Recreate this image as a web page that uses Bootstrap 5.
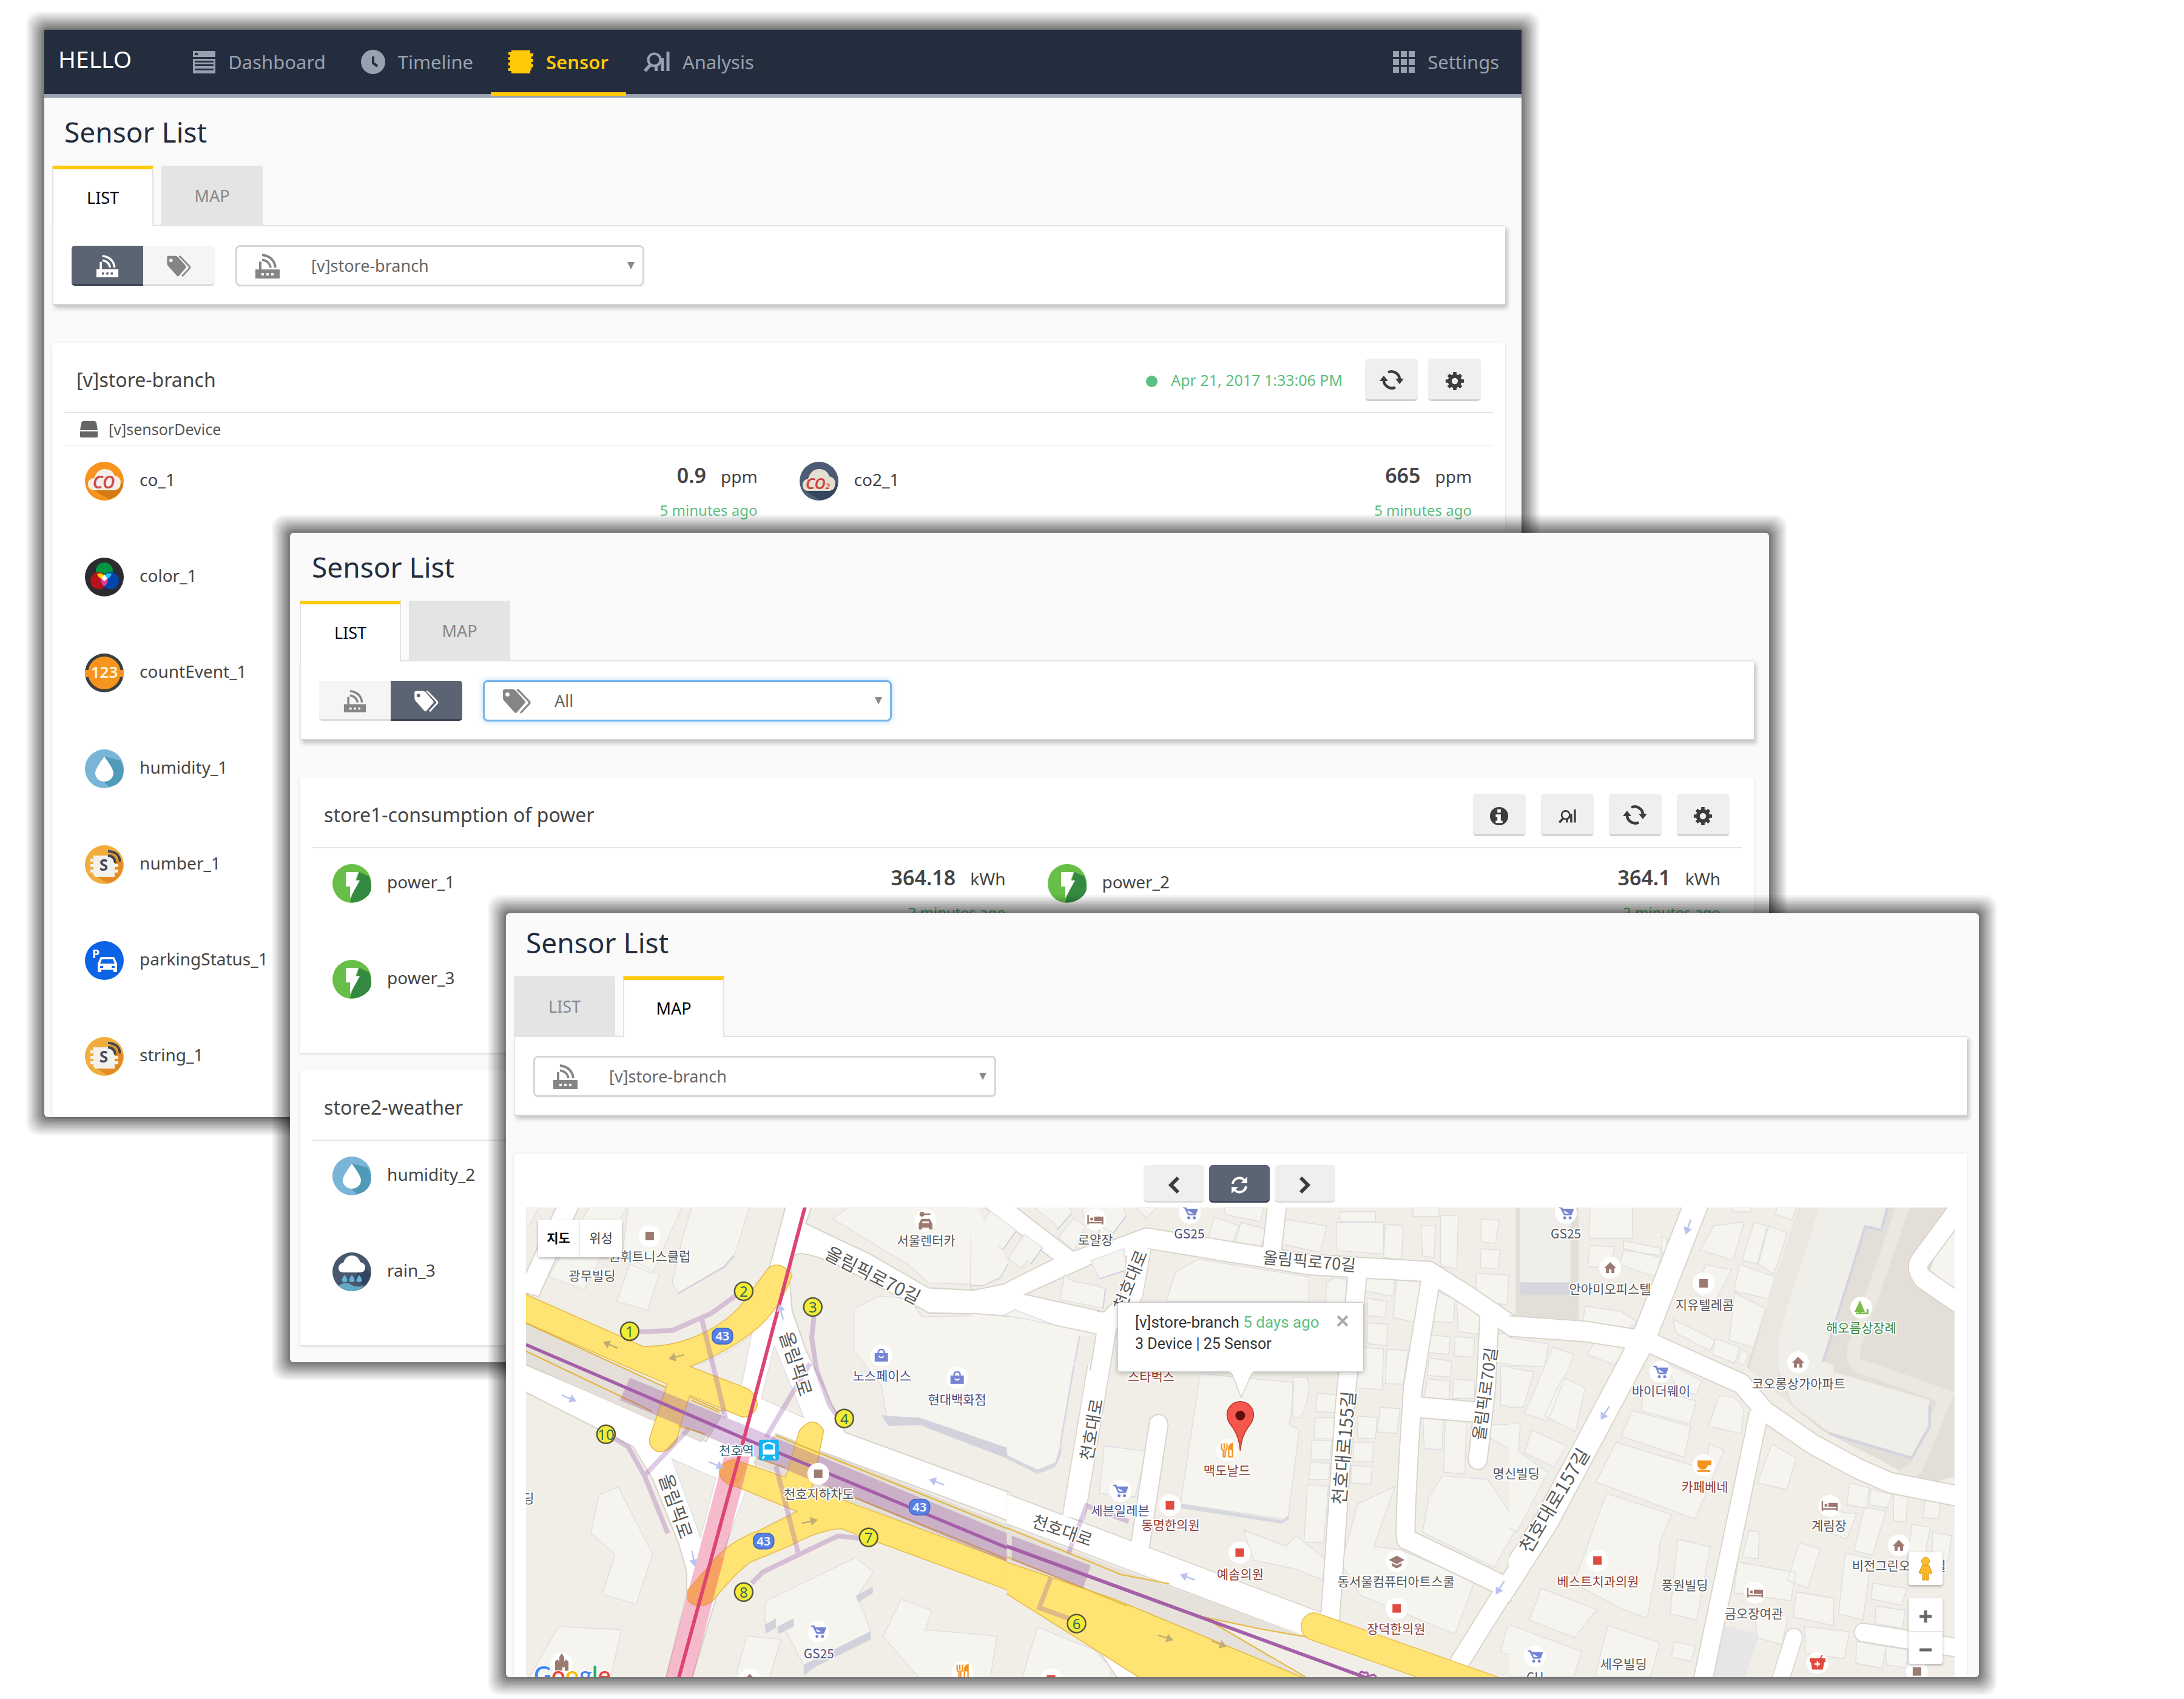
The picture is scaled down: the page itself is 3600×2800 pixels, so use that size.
<!DOCTYPE html>
<html lang="en">
<head>
<meta charset="utf-8">
<meta name="viewport" content="width=device-width, initial-scale=1">
<title>Sensor List</title>
<link rel="stylesheet" href="https://cdn.jsdelivr.net/npm/bootstrap@5.3.0/dist/css/bootstrap.min.css">
<style>
body{background:#fff;font-family:"Noto Sans","Noto Sans CJK KR",sans-serif;color:#444;font-size:28px;line-height:40px}
.desk{min-height:2800px;overflow:hidden}
.win{position:absolute;background:#fafafa;border-radius:6px;
 box-shadow:0 0 0 3px rgba(0,0,0,.1),0 0 0 6px rgba(0,0,0,.09),0 0 0 9px rgba(0,0,0,.08),0 0 0 12px rgba(0,0,0,.08),0 0 0 15px rgba(0,0,0,.07),0 0 0 18px rgba(0,0,0,.07),0 0 0 21px rgba(0,0,0,.06),0 0 0 24px rgba(0,0,0,.05),0 0 0 27px rgba(0,0,0,.05),0 0 0 30px rgba(0,0,0,.04)}
.win-a{left:2.03%;top:49px;width:67.64%}
.win-b{left:13.28%;top:878px;width:67.72%;padding-bottom:28px}
.win-c{left:23.17%;top:1505px;width:67.44%}
.win-a .inner{padding:0 27px 0 13px}
.win-b .inner{padding:0 25px 0 16px}
.win-c .inner{padding:0 20px 0 13px}
.topnav{background:#242d3e;height:112px;border-bottom:6px solid #9aa2b1;padding:0 8px 0 23px}
.brand{color:#fff;font-size:39px;line-height:50px;text-decoration:none;margin-right:72px;padding-bottom:10px}
.topnav .nav-link{color:#98a1b0;font-size:31px;height:112px;padding:6px 29px 0;border-bottom:6px solid transparent;gap:21px;display:flex;align-items:center}
.topnav .nav-link.active{color:#ffc907;font-weight:600;border-color:#ffc907}
.ttl{font-size:46px;line-height:60px;font-weight:400;color:#242d3e;margin:0;padding:26px 0 26px 20px}
.win-c .ttl{padding-top:18px}
.tabs{gap:13px;margin-bottom:-2px;position:relative}
.tabs button{border:0;width:167px;height:100px;background:#e4e4e4;color:#888;font-size:27px;padding:0}
.tabs button.on{background:#fff;color:#000;border:2px solid #e3e3e3;border-top:6px solid #ffc907;border-bottom:0}
.panel{background:#fff;border-top:2px solid #e3e3e3;border-left:2px solid #e6e6e6;border-bottom:2px solid #d4d4d4;box-shadow:4px 5px 7px rgba(0,0,0,.22);height:132px;padding:2px 30px 0;margin-bottom:62px;display:flex;align-items:center;gap:34px}
.seg button{width:118px;height:66px;border:0;border-bottom:3px solid #ddd;background:#f5f5f5;color:#858585;padding:0}
.seg button.on{background:#5b6473;color:#fff;border-color:#3c4453}
.seg button:first-child{border-radius:5px 0 0 5px}.seg button:last-child{border-radius:0 5px 5px 0}
.pick{position:relative;width:674px}
.pick.wide{width:763px}
.pick select{width:100%;height:68px;border:3px solid #d6d6d6;border-radius:8px;background:#fff;color:#666;font-size:27px;padding:0 40px 0 122px;appearance:none}
.pick.hot select{border-color:#74b6ee;box-shadow:0 0 10px rgba(102,175,233,.5);padding-left:115px}
.pick svg{position:absolute;left:32px;top:14px;color:#858585;pointer-events:none}
.pick::after{content:"";position:absolute;right:16px;top:28px;border:6px solid transparent;border-top:12px solid #8a8a8a;border-bottom:0}
.box{background:#fff;box-shadow:0 2px 4px rgba(0,0,0,.13);padding:0 20px 21px;margin-bottom:29px}
.win-a .box{padding-bottom:0;margin-bottom:0;border-radius:0 0 6px 6px}
.boxhead{height:116px;border-bottom:2px solid #e6e6e6;padding:8px 20px 0 20px}
.boxhead h2{font-size:32px;font-weight:400;margin:0;color:#444}
.stamp{font-size:25px;color:#5cbf7c;margin-right:37px}
.stamp i{display:inline-block;width:19px;height:19px;border-radius:50%;background:#5cc283;margin-right:22px;vertical-align:-2px}
.acts{gap:17px}
.acts.far{gap:25px}
.sq{width:87px;height:70px;border:0;border-bottom:3px solid #d0d0d0;border-radius:6px;background:#efefef;color:#3c3c3c;padding:0}
.dev{height:54px;border-bottom:2px solid #f2f2f2;font-size:25px;padding-left:26px;gap:18px;color:#555}
.item{height:158px;padding:26px 35px 0 34px}
.item .nm{margin-left:26px;line-height:58px}
.item b{font-size:34px;font-weight:600;margin-right:24px}
.item .vals{text-align:right;line-height:44px}
.item .ago{font-size:24px;line-height:68px;color:#5cbf7c}
.mapbox{background:#fff;box-shadow:0 0 4px rgba(0,0,0,.1);padding:19px 20px 0}
.mapnav{gap:8px;margin-bottom:8px;padding-right:4px}
.mapnav button{width:100px;height:62px;border:0;border-bottom:3px solid #ddd;border-radius:6px;background:#efefef;color:#3c3c3c;padding:0}
.mapnav button.on{background:#5b6473;color:#fff;border-color:#3c4453}
.mapwrap{position:relative;overflow:hidden}
.mapwrap>svg{display:block;width:100%;height:auto}
.mtype{position:absolute;left:20px;top:20px;box-shadow:0 2px 4px rgba(0,0,0,.3);border-radius:4px}
.mtype button{width:69px;height:62px;border:0;background:#fff;color:#444;font:21px/28px Roboto,"Noto Sans CJK KR",sans-serif;padding:0}
.mtype button.on{font-weight:700;color:#000;border-right:2px solid #eee}
.ctl{position:absolute;right:20px;width:56px;background:#fff;border-radius:4px;box-shadow:0 2px 4px rgba(0,0,0,.3)}
.ctl button{display:block;width:56px;height:54px;border:0;background:none;padding:0;color:#666}
.peg{bottom:152px}.zoom{bottom:22px}
.zoom button+button{border-top:2px solid #e6e6e6}
.bubble{position:absolute;left:41.4%;top:156px;width:406px;height:115px;background:#fff;border:1px solid #ccc;border-radius:4px;box-shadow:0 2px 8px rgba(0,0,0,.25);padding:14px 28px;font:25px/36px Roboto,sans-serif;color:#333}
.bubble .who{font-size:26px}
.bubble em{font-style:normal;color:#5cbf7c}
.bubble button{position:absolute;right:24px;top:20px;border:0;background:none;padding:0;line-height:0;color:#aaa}
.bubble svg.tail{position:absolute;left:184px;top:112px}
.lb text{font:21px "Noto Sans CJK KR",sans-serif;text-anchor:middle;dominant-baseline:central;fill:#555;stroke:#fff;stroke-width:4px;paint-order:stroke;stroke-linejoin:round}
.lb .rd{font-size:28px;fill:#5a5a5a}.lb .rs{font-size:27px;fill:#5a5a5a}
.lb .nv{fill:#474c80}.lb .rb{fill:#8f3d33}.lb .gn{fill:#3f8a3a}.lb .tl{fill:#2c6378}
.lb .ex{font:24px "Noto Sans";fill:#37665c;stroke:none}
.lb .sh{font:600 20px "Noto Sans";fill:#fff;stroke:none}
.road{fill:none;stroke:#fff;stroke-linejoin:round}
.roadedge{fill:none;stroke:#d9d4ca;stroke-linejoin:round}
.bd{fill:#f5f4ef;stroke:#dddde2;stroke-width:2.5}
</style>
</head>
<body>
<svg width="0" height="0" class="position-absolute" aria-hidden="true"><defs>
<symbol id="router" viewBox="0 0 42 42"><path fill="currentColor" d="M1 26h6V13h4v13h30v15H1z"/><path fill="none" stroke="currentColor" stroke-width="3.800" d="M12 2q20 3 22 21M12 10q12 2 14 13"/><path fill="#fff" d="M11 32h4v4h-4zM19 32h4v4h-4zM27 32h4v4h-4z"/></symbol>
<symbol id="router-on" viewBox="0 0 42 42"><path fill="#fff" d="M1 26h6V13h4v13h30v15H1z"/><path fill="none" stroke="#fff" stroke-width="3.800" d="M12 2q20 3 22 21M12 10q12 2 14 13"/><path fill="#5b6473" d="M11 32h4v4h-4zM19 32h4v4h-4zM27 32h4v4h-4z"/></symbol>
<symbol id="tags" viewBox="0 0 48 42"><path fill="currentColor" fill-rule="evenodd" d="M1 4q0-3 3-3h13q3 0 5 2l15 17q2 2 0 4L24 39q-2 2-4 0L3 20q-2-2-2-5zM8.500 6a3.500 3.500 0 1 0 .1 0z"/><path fill="none" stroke="currentColor" stroke-width="3.200" d="M24 2q2 0 4 2l16 17q2 2 0 4L30 40"/></symbol>
<symbol id="sync" viewBox="0 0 40 40"><path fill="none" stroke="currentColor" stroke-width="4.500" d="M7 19A13.500 13.500 0 0 0 26 32.500M33 21A13.500 13.500 0 0 0 14 7.500"/><path fill="currentColor" d="M0 22 7 13l7 9zM26 18h14l-7 9z"/></symbol>
<symbol id="sync2" viewBox="0 0 30 30"><path fill="none" stroke="currentColor" stroke-width="4" d="M4 13A11 11 0 0 1 23 7M26 17A11 11 0 0 1 7 23"/><path fill="currentColor" d="M28 1v11H17zM2 29V18h11z"/></symbol>
<symbol id="gear" viewBox="0 0 34 34"><path fill="none" stroke="currentColor" stroke-width="6" d="M17 1v32M1 17h32M6 6l22 22M28 6 6 28"/><circle cx="17" cy="17" r="9" fill="none" stroke="currentColor" stroke-width="6"/><circle cx="17" cy="17" r="5.500" fill="#efefef"/></symbol>
<symbol id="anal" viewBox="0 0 43 34"><g fill="none" stroke="currentColor"><circle cx="17.500" cy="13.500" r="10" stroke-width="4"/><path d="M11 22 2 32" stroke-width="5.500"/><path d="M20.500 24v8M31 11v21M40 0v32" stroke-width="5"/><path d="m18 25 7-4 4-7" stroke-width="4"/></g></symbol>
<symbol id="info" viewBox="0 0 34 34"><circle cx="17" cy="17" r="16" fill="currentColor"/><path fill="#fff" d="M14 5h6v6h-6zM11 14h9v11h3v4H11v-4h3v-7h-3z"/></symbol>
<symbol id="s-co" viewBox="0 0 64 64"><circle cx="32" cy="32" r="32" fill="#f7941d"/><path d="M10 44 40 62q18-6 23-24L50 24z" fill="#d37a12"/><path d="M14 47q-10-2-9-12 2-8 10-8 5-15 18-15 12 0 16 11 9 1 10 11 0 11-9 13z" fill="#f6efe6"/><text x="31" y="44" text-anchor="middle" font-family="Noto Sans" font-style="italic" font-weight="600" font-size="28" fill="#d0474b">CO</text></symbol>
<symbol id="s-co2" viewBox="0 0 64 64"><circle cx="32" cy="32" r="32" fill="#4d5c74"/><path d="M10 48 34 63q24-2 29-25L50 24z" fill="#34465f"/><path d="M12 48q-8-2-7-12 2-7 9-8 5-16 18-16 13 0 17 12 9 2 10 11 0 11-9 13z" fill="#e4dfd0"/><text x="30" y="45" text-anchor="middle" font-family="Noto Sans" font-style="italic" font-weight="600" font-size="25" fill="#cf4145">CO<tspan font-size="13">2</tspan></text></symbol>
<symbol id="s-color" viewBox="0 0 64 64"><circle cx="32" cy="32" r="32" fill="#2c2c30"/><circle cx="32" cy="22" r="14" fill="#009640"/><circle cx="23" cy="38" r="14" fill="#b5121b"/><circle cx="42" cy="38" r="14" fill="#0046ad"/><path d="M20 27q8-3 12 3l-1 6q-8-1-11-9z" fill="#ffd500"/><path d="M44 27q-8-3-12 3l1 6q8-1 11-9z" fill="#2ec4ea"/><path d="M32 29l6 7q-1 9-6 11-5-2-6-11z" fill="#dd3c9a"/><path d="m32 28 5 6-5 5-5-5z" fill="#fff"/></symbol>
<symbol id="s-count" viewBox="0 0 64 64"><circle cx="32" cy="32" r="32" fill="#3a3f40"/><circle cx="32" cy="32" r="27" fill="#f7941d"/><path d="M0 27h64v12H0z" fill="#f7941d"/><text x="32" y="40" text-anchor="middle" font-family="Noto Sans" font-weight="600" font-size="26" fill="#fff6df">123</text></symbol>
<symbol id="s-hum" viewBox="0 0 64 64"><circle cx="32" cy="32" r="32" fill="#79b5d6"/><path d="M33 12 58 18q14 25-6 40l-12 4-14-14z" fill="#4f9ab8"/><path d="M32 12Q17 32 17 39a15 14 0 0 0 30 0Q47 32 32 12z" fill="#fff"/></symbol>
<symbol id="s-num" viewBox="0 0 64 64"><circle cx="32" cy="32" r="32" fill="#f0ad3e"/><path d="m16 50 28-38 19 18q0 25-25 33z" fill="#e38b22"/><path d="M14 17h28l7 10v25H17l-3-3zM9 22h5v5H9zM9 31h5v5H9zM9 40h5v5H9zM49 31h6v5h-6zM49 40h6v5h-6z" fill="#f3f1ec"/><path d="M38 10q18 0 20 17M38 17q11 1 12 12" fill="none" stroke="#3f4650" stroke-width="4"/><text x="31" y="42" text-anchor="middle" font-family="Noto Sans" font-weight="700" font-size="26" fill="#3d4a63">S</text></symbol>
<symbol id="s-park" viewBox="0 0 64 64"><circle cx="32" cy="32" r="32" fill="#0b63e5"/><text x="18" y="28" text-anchor="middle" font-family="Noto Sans" font-weight="700" font-size="20" fill="#fff">P</text><path d="M26 26h22l5 11v14h-6v-4H27v4h-6V37z" fill="#fff"/><path d="M28 30h18l3 7H25z" fill="#0b63e5"/><path d="M25 41h5v3h-5zM44 41h5v3h-5z" fill="#0b63e5"/></symbol>
<symbol id="s-pow" viewBox="0 0 64 64"><circle cx="32" cy="32" r="32" fill="#67bf47"/><path d="M44 13 60 20q12 26-9 38-10 6-22 5z" fill="#348a41"/><path d="M22 13h21l-5 14h7L29 56V37h-7z" fill="#fff"/></symbol>
<symbol id="s-rain" viewBox="0 0 64 64"><circle cx="32" cy="32" r="32" fill="#48566e"/><path d="M50 20 63 35q-2 12-10 20l-16-12z" fill="#33455e"/><path d="M10 55q12-9 22-1 11 5 22 0-22 20-44 1z" fill="#62a9c6"/><path d="M17 33q-8-1-7-9 2-6 8-7 4-12 14-12 10 0 14 11 8 2 8 9 0 7-8 8z" fill="#fff"/><path d="M20 37q9 12 0 12t0-12zM32 37q9 12 0 12t0-12zM44 37q9 12 0 12t0-12z" fill="#62b4d8"/></symbol>
<g id="m-dot"><circle r="18" fill="#fff"/></g>
<g id="m-br"><circle r="18" fill="#fff"/><path d="M-7-7H7V7H-7z" fill="#9c7a70"/></g>
<g id="m-red"><circle r="18" fill="#fff"/><path d="M-7-7H7V7H-7z" fill="#e04b3e"/></g>
<g id="m-cart"><circle r="18" fill="#fff"/><path d="M-12-9h5l5 12H9M-7-6h19L9 2H-3z" fill="#7585d3" stroke="#7585d3" stroke-width="2"/><circle cx="-2" cy="8" r="2.500" fill="#7585d3"/><circle cx="7" cy="8" r="2.500" fill="#7585d3"/></g>
<g id="m-bag"><circle r="18" fill="#fff"/><path d="M-11-4h22v14h-22z" fill="#7585d3"/><path d="M-5-4q0-6 5-6t5 6" stroke="#7585d3" stroke-width="2.500" fill="none"/><path d="M-4 1q4 5 8 0" stroke="#fff" stroke-width="2" fill="none"/></g>
<g id="m-home"><circle r="18" fill="#fff"/><path d="M0-9 10 1H7v8H2V3h-4v6h-5V1h-3z" fill="#9c7a70"/></g>
<g id="m-bed"><circle r="18" fill="#fff"/><path d="M-12-8v16M12 8V-5M-12 5h24" stroke="#9c7a70" stroke-width="2.500"/><circle cx="-6" cy="-1" r="2.500" fill="#9c7a70"/><path d="M-2-5h10q4 0 4 4v3H-2z" fill="#9c7a70"/></g>
<g id="m-fork"><circle r="18" fill="#fff"/><path d="M-9-11v8q0 3 3 3v11h3V0q3 0 3-3v-8M-4.500-11v9M3 11V1Q2-9 9-11v22z" fill="none" stroke="#f59220" stroke-width="2.200"/><path d="M4 0Q3-9 9-11V0z" fill="#f59220"/></g>
<g id="m-grad"><circle r="18" fill="#fff"/><path d="M0-9 13-2 0 5-13-2zM-8 3 0 7l8-4v5l-8 4-8-4z" fill="#9c7a70"/></g>
<g id="m-car"><circle r="18" fill="#fff"/><path d="M-6-1H6l4 7v8H7v-3H-7v3h-3V6zM-9-10h17" fill="#9c7a70" stroke="#9c7a70" stroke-width="2.500"/><circle cx="-6" cy="-10" r="4" fill="#9c7a70"/><path d="M-5 2H5l1 3H-6z" fill="#fff"/></g>
<g id="m-ex"><circle r="15" fill="#f3ec35" stroke="#56563f" stroke-width="2.500"/></g>
<g id="m-sh"><rect x="-17" y="-13" width="34" height="26" rx="11" fill="#5680e4" stroke="#3f66c4" stroke-width="1.500"/></g>
<g id="m-ar"><path d="M-12 0H4M4-5 12 0 4 5z" fill="currentColor" stroke="currentColor" stroke-width="2.500"/></g>
</defs></svg>

<main class="desk position-relative">
<section class="win win-a">
 <nav class="topnav d-flex align-items-center">
  <a class="brand" href="#">HELLO</a>
  <div class="nav flex-nowrap flex-grow-1">
   <a class="nav-link" href="#"><svg width="37" height="37" viewBox="0 0 37 37" fill="currentColor"><path fill-rule="evenodd" d="M0 0h37v10H0zM3 3v4h5V3zM0 13h37v24H0zM3 16v3h31v-3zM3 22v3h31v-3zM3 29v3h31v-3z"/></svg>Dashboard</a>
   <a class="nav-link" href="#"><svg width="40" height="40" viewBox="0 0 40 40"><circle cx="20" cy="20" r="20" fill="currentColor"/><path d="M20 11v11l7 5" fill="none" stroke="#242d3e" stroke-width="4"/></svg>Timeline</a>
   <a class="nav-link active" href="#"><svg width="41" height="38" viewBox="0 0 41 38" fill="currentColor"><path d="M5 0h31v5h5v5h-3v4h3v5h-3v4h3v5h-3v5h-2v5H5v-4H0v-5h3v-4H0v-5h3v-4H0v-5h3V7H0V3h5z"/></svg>Sensor</a>
   <a class="nav-link" href="#"><svg width="43" height="34"><use href="#anal"/></svg>Analysis</a>
  </div>
  <a class="nav-link" href="#"><svg width="36" height="36" viewBox="0 0 36 36" fill="currentColor"><path d="M0 0h10v10H0zM13 0h10v10H13zM26 0h10v10H26zM0 13h10v10H0zM13 13h10v10H13zM26 13h10v10H26zM0 26h10v10H0zM13 26h10v10H13zM26 26h10v10H26z"/></svg>Settings</a>
 </nav>
 <div class="inner">
  <h1 class="ttl">Sensor List</h1>
  <div class="tabs d-flex"><button class="on" type="button">LIST</button><button type="button">MAP</button></div>
  <div class="panel">
   <div class="seg d-flex"><button class="on" type="button" aria-label="Gateways"><svg width="38" height="38"><use href="#router-on"/></svg></button><button type="button" aria-label="Tags"><svg width="42" height="36"><use href="#tags"/></svg></button></div>
   <div class="pick"><select aria-label="Gateway"><option>[v]store-branch</option></select><svg width="42" height="42"><use href="#router"/></svg></div>
  </div>
  <div class="box">
   <div class="boxhead d-flex align-items-center"><h2 class="flex-grow-1">[v]store-branch</h2><span class="stamp"><i></i>Apr 21, 2017 1:33:06 PM</span>
    <div class="acts d-flex"><button class="sq" type="button" aria-label="Refresh"><svg width="40" height="40"><use href="#sync"/></svg></button><button class="sq" type="button" aria-label="Configure"><svg width="32" height="32"><use href="#gear"/></svg></button></div></div>
   <div class="dev d-flex align-items-center"><svg width="29" height="27" viewBox="0 0 29 27" fill="#666"><path d="M5 0h19q2 0 3 3l2 12H0L2 3q1-3 3-3zM0 17h29v8q0 2-2 2H2q-2 0-2-2z"/></svg>[v]sensorDevice</div>
   <div class="row g-0">
    <div class="col-6 item d-flex"><svg width="64" height="64"><use href="#s-co"/></svg><span class="nm flex-grow-1">co_1</span><div class="vals"><b>0.9</b>ppm<div class="ago">5 minutes ago</div></div></div>
    <div class="col-6 item d-flex"><svg width="64" height="64"><use href="#s-co2"/></svg><span class="nm flex-grow-1">co2_1</span><div class="vals"><b>665</b>ppm<div class="ago">5 minutes ago</div></div></div>
   </div>
   <div class="item d-flex"><svg width="64" height="64"><use href="#s-color"/></svg><span class="nm">color_1</span></div>
   <div class="item d-flex"><svg width="64" height="64"><use href="#s-count"/></svg><span class="nm">countEvent_1</span></div>
   <div class="item d-flex"><svg width="64" height="64"><use href="#s-hum"/></svg><span class="nm">humidity_1</span></div>
   <div class="item d-flex"><svg width="64" height="64"><use href="#s-num"/></svg><span class="nm">number_1</span></div>
   <div class="item d-flex"><svg width="64" height="64"><use href="#s-park"/></svg><span class="nm">parkingStatus_1</span></div>
   <div class="item d-flex"><svg width="64" height="64"><use href="#s-num"/></svg><span class="nm">string_1</span></div>
  </div>
 </div>
</section>

<section class="win win-b">
 <div class="inner">
  <h1 class="ttl">Sensor List</h1>
  <div class="tabs d-flex"><button class="on" type="button">LIST</button><button type="button">MAP</button></div>
  <div class="panel">
   <div class="seg d-flex"><button type="button" aria-label="Gateways"><svg width="38" height="38"><use href="#router"/></svg></button><button class="on" type="button" aria-label="Tags"><svg width="42" height="36"><use href="#tags"/></svg></button></div>
   <div class="pick hot"><select aria-label="Tag"><option>All</option></select><svg width="48" height="42"><use href="#tags"/></svg></div>
  </div>
  <div class="box">
   <div class="boxhead d-flex align-items-center"><h2 class="flex-grow-1">store1-consumption of power</h2>
    <div class="acts far d-flex"><button class="sq" type="button" aria-label="Information"><svg width="32" height="32"><use href="#info"/></svg></button><button class="sq" type="button" aria-label="Analysis"><svg width="29" height="23"><use href="#anal"/></svg></button><button class="sq" type="button" aria-label="Refresh"><svg width="40" height="40"><use href="#sync"/></svg></button><button class="sq" type="button" aria-label="Configure"><svg width="32" height="32"><use href="#gear"/></svg></button></div></div>
   <div class="row g-0">
    <div class="col-6 item d-flex"><svg width="64" height="64"><use href="#s-pow"/></svg><span class="nm flex-grow-1">power_1</span><div class="vals"><b>364.18</b>kWh<div class="ago">2 minutes ago</div></div></div>
    <div class="col-6 item d-flex"><svg width="64" height="64"><use href="#s-pow"/></svg><span class="nm flex-grow-1">power_2</span><div class="vals"><b>364.1</b>kWh<div class="ago">2 minutes ago</div></div></div>
   </div>
   <div class="item d-flex"><svg width="64" height="64"><use href="#s-pow"/></svg><span class="nm">power_3</span></div>
  </div>
  <div class="box mb-0">
   <div class="boxhead d-flex align-items-center"><h2>store2-weather</h2></div>
   <div class="item d-flex"><svg width="64" height="64"><use href="#s-hum"/></svg><span class="nm">humidity_2</span></div>
   <div class="item d-flex"><svg width="64" height="64"><use href="#s-rain"/></svg><span class="nm">rain_3</span></div>
  </div>
 </div>
</section>

<section class="win win-c">
 <div class="inner">
  <h1 class="ttl">Sensor List</h1>
  <div class="tabs d-flex"><button type="button">LIST</button><button class="on" type="button">MAP</button></div>
  <div class="panel"><div class="pick wide"><select aria-label="Gateway"><option>[v]store-branch</option></select><svg width="42" height="42"><use href="#router"/></svg></div></div>
  <div class="mapbox">
   <div class="mapnav d-flex justify-content-center"><button type="button" aria-label="Previous"><svg width="20" height="30" viewBox="0 0 20 30"><path d="M17 3 5 15l12 12" fill="none" stroke="currentColor" stroke-width="6"/></svg></button><button class="on" type="button" aria-label="Refresh"><svg width="30" height="30"><use href="#sync2"/></svg></button><button type="button" aria-label="Next"><svg width="20" height="30" viewBox="0 0 20 30"><path d="m3 3 12 12L3 27" fill="none" stroke="currentColor" stroke-width="6"/></svg></button></div>
   <div class="mapwrap">
<svg viewBox="867 1989 2356 774" role="img" aria-label="Map">
<rect x="867" y="1989" width="2356" height="774" fill="#f1eee8"/>
<!-- west part -->
<svg x="840" y="1960" width="828" height="830" viewBox="0 0 1545.600 1568" preserveAspectRatio="none">
 <path class="bd" d="M50 55h40L60 110l-10-5zM245 55h115L230 310 120 270zM365 55h165L440 260 345 220zM560 55h178l-48 155-30 32-140 80-20-32 30-130zM375 215l85 50-35 110-95-28zM995 90l45-35h420l70 115 5 70-75 55-170-5-60-55zM1485 65l75 65-40 55-80-70zM1060 370l80-40 90 10 40 55 298-5v430l-308-110-100-5-15-95-85-110zM275 950l60-25 105 210-50 155-105-30 40-125-75-65zM150 1360l195 10-35 150H60zM790 1280l275-135 55 45-50 75 42 110-207 105-50-100-70-35zM730 1390l105 10-35 120H695zM1205 1275l95 35-20 60 220 20-20 130h-220l-110-130z"/>
 <path d="M1145 700l20 5 100 5 300 105v35l-300-117-100 2zM905 1480l207-105v25l-175 88-30 25zM785 1355l35-20v28l-30 18zM825 1360l50-25v26l-48 22zM1066 1265l52-30v22l-45 28z" fill="#d2d2dc"/>
 <path d="M520 322l140-82 30-35" fill="none" stroke="#d2d2dc" stroke-width="5"/>
 <g fill="#fff" stroke="#d9d4ca" stroke-width="4" stroke-linejoin="round"><path d="M145 50h70L90 332l-45-12v-50z"/><path d="M850 50h80l-18 55 198 95 180 105 130 7 150-37v115l-280-7-60-33-220-115q-60-30-110-37-30 2-30 20l-8 60 8 100 43 122 120 255 540 200v90L960 815l-140-55-60 90 -25 90L560 1525h-80l65-265v-70l-25-90-80-200-60-100-335-172v-85l560 240 95-163z"/></g>
 <path class="bd" style="fill:#f1eee8" d="M745 450l-30 155-10 5-150-58q110-30 190-102zM815 485l92 225-132-60zM500 838l135 60-47 185zM730 930l150 70-220 120z"/>
 <path d="M45 412 655 700l-65 85L45 540zM820 760l748 300v115L750 850z" fill="#e4dfd8" stroke="#d9d4ca" stroke-width="2"/>
 <g fill="#ffe373" stroke="#e6bd4f" stroke-width="3"><path d="M45 323 410 487q70 3 140-22 110-40 170-115l75-105q35-30 75 20-40 115-125 180-85 65-190 105l180 70q35 30 25 60-20 35-50 25l-155-65-25 80-15 60q-25 40-60 35-30-15-23-45L485 605 45 412z"/><path d="M892 750q43-55 75 0l-37 180 120 45 520 195v90l-550-205q-70 5-160 55l-120 50q-50 40-115 120-35 30-75 0-5-30 0-35l90-105q50-50 130-80l115-58-185-77q-50-10-55-45 5-35 45-40l160 55z"/></g>
 <path d="M45 500 440 690M50 415 480 615M555 645l100 45M560 655l85 37M520 735l80 25M820 765l748 305M980 925l588 240M760 835l90 30" fill="none" stroke="#e2b338" stroke-width="4"/>
 <path d="M660 830h80l-178 700h-85z" fill="#e5557f" opacity=".4"/>
 <path d="M690 840q-40 5-45 40 5 35 60 40l25-60zM640 1140l-90 105q-15 50 30 52 30 0 45-20l35-130z" fill="#f59b50" opacity=".55"/>
 <path d="m370 585 1198 500v90L340 655z" fill="#8e4aa0" opacity=".3"/>
 <path d="M400 442l100-4 120-53 75-55M590 395l75 315M937 395l-7 65 15 100 40 110 20 30M925 540 790 770M325 775l40 25 50 90 72 180M415 890 550 745M745 1225l35-35 230-112 70 7M888 1130 820 860" fill="none" stroke="#9c5cae" stroke-width="15" opacity=".32"/>
 <path d="m50 482 667 290 851 358" fill="none" stroke="#a45fa8" stroke-width="10"/>
 <path d="M910 50 720 780 518 1530" fill="none" stroke="#dd4472" stroke-width="11"/>
</svg>
<!-- central part -->
<svg x="1660" y="1880" width="840" height="910" viewBox="0 0 1568 1568" preserveAspectRatio="none">
 <path class="bd" d="M-5 480l227 70-57 310-15 55-55 25-95-50zM240 188l125 25-70 90-130-60zM400 188h60l-30 30zM590 335l340 50v70H490l30-85zM595 660l290 25-15 120 30 15-35 255-330-45zM300 865l130 15-35 130-110-10zM850 220l135 20-20 75-130-25zM640 215l75 25-25 55-70-20zM720 230l80 20-20 55-75-20zM670 188h120l-8 40-110-20zM1015 230h145v90l-145-10zM1025 200h110v28h-110zM1165 235l55 5-5 95-55-5zM1275 240h45l-5 90-35-5zM1335 210h55l-5 150-50-5zM1250 188h80v25h-80zM1460 220l55 5-10 65-45-5zM1460 305l58 3-5 55-55-5zM1445 375l100 5-5 85-95-15zM1105 370l90 5-5 65-90-15zM1200 390l75 5-15 120-70-15zM1110 445l60 10-5 45-55-5zM1110 515l62 5-3 60-60-5zM1095 585l65 5-5 115-90-5zM1170 590l65 5-15 95-55-2zM955 715l60 5-5 50-60-2zM950 785h60l-5 60h-60zM1080 780l60 5-5 60-55-2zM1150 755l60 5-10 70-60-5zM940 850h60l-5 55h-60zM1068 855h60l-2 55h-60zM935 910l60 5-5 45h-60zM1060 920l65 5-5 50-60-5zM925 975l65 5-15 160h-60zM985 400q30-20 60-5v65h-65zM880 670h45q15 40-20 115h-25zM1310 420l70 30-5 65-70-5zM1385 450l85 50-10 50-70-10zM1300 550l65 5-5 50-70-5zM1380 555l60 3-3 55-60-3zM1300 615l70 10-5 45-70-5zM1295 675l70 5-5 55-75-8zM1375 675l65 5v50h-68zM1280 770h65l-5 105-55-2zM1350 785l65 5-5 155-65-5zM1505 545l70 5v85l-75-5zM1520 640h50v115l-50-5zM1485 805h90v85l-90-50zM1340 950l140 10 95 130-75 120-220-100 20-100zM1080 1030l115-50-65 170 80 10 230 90-60 150-290-110-60-90zM730 1105l130 45 30-30 95 70-15 55-80-30-130-25zM95 1380l175 65 55 55-15 30H45zM480 1505l100 20H470zM1540 1380h40v90l-60-20z"/>
 <path d="M535 1030l312 47 20-15v12l-20 12-312-44zM-5 890l100 42 55-20 18-50v25l-18 38-55 20-100-45z" fill="#d6d7df"/>
 <path d="M222 552 195 700l-30 160" fill="none" stroke="#d6d7e3" stroke-width="5"/>
 <g class="roadedge" stroke-width="62"><path d="M-20 437l170-67 150-50 130-45 500 75 370 20 120 70 160 100M-20 470l320 45M832 180l-17 140M1080 370l-40 390-45 600M1305 390l-55 310q-30 430-20 430l338 150M1260 755l200 15M1590 1190l-210 310M270 1380l30 40 80 110"/><path stroke-linecap="round" d="M467 805l-57 345M1485 500l-10 200-25 203"/><path stroke-width="72" d="M410 300l-25 130-80 90-100 550"/><path stroke-width="84" d="M-20 1037l990 345"/></g>
 <g class="road" stroke-width="55"><path d="M-20 437l170-67 150-50 130-45 500 75 370 20 120 70 160 100M-20 470l320 45M832 180l-17 140M1080 370l-40 390-45 600M1305 390l-55 310q-30 430-20 430l338 150M1260 755l200 15M1590 1190l-210 310M270 1380l30 40 80 110"/><path stroke-linecap="round" d="M467 805l-57 345M1485 500l-10 200-25 203"/><path stroke-width="66" d="M410 300l-25 130-80 90-100 550"/><path stroke-width="78" d="M-20 1037l990 345"/></g>
 <path d="M-10 1090 350 1215l570 190 120 125H920L330 1300-10 1195z" fill="#e6e1da"/>
 <path d="M920 1405l500 130H930L620 1355z" fill="#f1eee8"/>
 <path d="M-10 1192 330 1300l600 230H420L-10 1280z" fill="#ffe373" stroke="#e6bd4f" stroke-width="3"/>
 <path d="m945 1378 560 182" stroke="#e6bd4f" stroke-width="80" stroke-linecap="round"/><path d="m945 1378 560 182" stroke="#ffe373" stroke-width="75" stroke-linecap="round"/>
 <path d="M0 1098 350 1230l150 27M0 1180l370 140M600 1350l180 35 145 23M620 1360l300 162" fill="none" stroke="#e6ba45" stroke-width="4"/>
 <path d="m15 1120 243 85-23 65-220-80z" fill="#8e4aa0" opacity=".3"/>
 <path d="m375 1080-130-45-55 135M135 1240l-35 85 90 30" fill="none" stroke="#9c5cae" stroke-width="14" opacity=".32"/>
 <path d="M-10 1147 1110 1525" stroke="#a45fa8" stroke-width="10"/><path d="M1085 1525q0-25 15-15 15-5 10 10l20-5 8 8" stroke="#a45fa8" stroke-width="6" fill="none"/>
</svg>
<!-- junction of the northern streets -->
<g transform="translate(1520 1985) scale(.3333)">
 <path d="M250 0h615v640l-25 60H250z" fill="#fff"/>
 <g fill="#f1eee8" stroke="#d9d4ca" stroke-width="6"><path d="M245-5h45l358 273-248 124-150 30-10-20zM445-5l303 233 130-45V-5zM510 442l325-147 165-60 5 95-20 110-85 88z"/></g>
 <path d="M245 536l235 18 180 40 202 44-25 150H245z" fill="#f5f4ef"/><path d="M245 536l235 18 180 40 202 44-30 180" fill="none" stroke="#d9d4ca" stroke-width="6"/>
 <path d="M782 650l76-8-28 150h-75z" fill="#f1eee8"/>
 <g class="bd" style="stroke-width:4"><path d="M340 30l127 95-67 95-128-100zM507 145l90 63-57 82-23-13-22 35-70-47zM705 345l40 30 105 20 58 20-13 95-210-42zM835 275l165-60 10 110-132 40zM540 0h190l10 40-70 80-10-25zM750 65l60 40-60 120-75-65zM790 0h200l20 50-60 90-150-80zM400 545l60-27 190 72-170-32z"/></g>
 <path d="M467 128l-67 92M597 210l-57 80M425 290l-38 70-87 38-60-2M740 42l-70 80M1010 55l-62 82M908 415l-12 97M780 650l-25 130M878 365l122-40" fill="none" stroke="#cfd0e2" stroke-width="6"/>
 <path d="M240-5h20l165 290-40 73-85 38-60-2z" fill="#f5f4ef"/>
</g>
<!-- east part -->
<svg x="2488" y="1880" width="840" height="910" viewBox="15 0 1568 1568" preserveAspectRatio="none">
 <path d="M35 188h195v327L35 495zM970 188h416v765l-90 22-150-75-170-80-90-70-140-110 100-260z" fill="#e3dfd8"/>
 <path d="M905 188h65L845 550v110l40 90-130-105 85-270z" fill="#eae7e1"/>
 <path d="M1230 180l-150 400q-15 50 20 60l260 85-90 200-60 40" fill="none" stroke="#ebe8e2" stroke-width="40"/>
 <path d="M50 188h155v212H50z" fill="#efeeea"/><path d="M50 402h155v35H50z" fill="#d6d7de"/>
 <path d="M970 188h210l-20 62-50-10-125 385 30 10v20l295 80v60l-55 100-255-70-110-75-45-100V550z" fill="#efeee9"/>
 <path d="M1180 190l-18 62-50-10-130 385M1310 750v60l-55 90-255-70" fill="none" stroke="#d3d4de" stroke-width="8"/>
 <path d="m680 1375 105 25-45 130H640z" fill="#e6e6e6"/>
 <path class="bd" d="M265 185h130v90H262zM265 295l75 5-12 60-70-5zM368 282l115 22-3 20-112-15zM370 305l112 25-15 55-110-35zM485 270l18 8-5 45-12-5zM250 468l110 15 50 30-30 20-138-15zM0 375h12l-5 115H-5zM0 555l137 20-12 65-125-5zM0 640l92 15-32 100H0zM150 585l65 20-80 190-72-22zM290 555l95 20-45 60-85-30zM180 670l70 30-30 125-95-45zM85 820l108 45-40 60-90-40zM0 800h50l-5 80 90 60-95 170-40-20zM645 240l95-12-35 110-100-30zM770 230l40 10-30 108-47-10zM815 240l57 20-42 118-47-30zM725 350l110 35-22 62-105-22zM710 430l95 45-37 110-75-20zM620 350l80 15-50 90-60-20zM520 505l130 60-15 30-105-50zM650 560l75 25-15 45-68-25zM730 590l25 15-18 32-15-10zM705 188h55v12h-55zM840 188h60l-15 35-50-15zM500 630l110 50-20 40-60-20zM430 700l162 38-20 65-150-38zM395 765l180 45-20 88-195-60zM660 725q60-10 78 40l-8 65-100-20zM345 855l270 75 18-70 45 18-90 195-305-105zM315 1000l200 60-35 80-5 50-35 165-85-30-140-70zM535 1130l100 22-42 208-82-18zM115 1270l170 60-68 80-140-50zM10 1370l230 80-25 71H0zM320 1375l160 50-30 96H280zM525 1420l65 15-15 42-60-12zM825 860l75 40-30 90-90-20zM755 1105l30 5-2 75-50-3zM720 1195l178 30-15 80-175-22zM910 1140l63 18-38 110-62-20zM900 1280l115 18v78l-125-25zM770 1330l105 20-20 80-75-20zM925 1378l138 15-15 77-120-15zM1065 970l60 15-10 58-60-12zM1130 988l65 15-15 38-55-8zM1200 1000l42 12-5 70-38-5zM1298 1010l45 5-5 58-48-5zM1110 1040l65 10-40 125-58-12zM1255 1088l57 8-20 100-50-8zM1320 1110l58 10-10 70-50-5zM1015 1050l70 8-30 72-85-30zM1050 1170l80 15-25 175-75-18zM1135 1255l105 15-15 48-95-18zM1145 1320l90 12-8 50-85-12zM1085 1420l90 15-10 62-82-14zM1175 1435l70 10-8 50-60-8zM1365 240l30 20v170l-85-65z"/>
 <g class="roadedge" stroke-width="62"><path stroke-width="78" d="M595 170L430 560 130 1080l-180 260"/><path d="M-20 522l270 18 190 28 290 120 75 80 145 92 140 70 100 40 220 40M785 770L610 1540M1400 190l-120 150q-15 20 10 50l110 70"/><path stroke-linecap="round" stroke-width="56" d="M1105 1395l300 45M892 1410l-45 130"/></g>
 <g class="road" stroke-width="55"><path stroke-width="71" d="M595 170L430 560 130 1080l-180 260"/><path d="M-20 522l270 18 190 28 290 120 75 80 145 92 140 70 100 40 220 40M785 770L610 1540M1400 190l-120 150q-15 20 10 50l110 70"/><path stroke-linecap="round" stroke-width="50" d="M1105 1395l300 45M892 1410l-45 130"/></g>
</svg>
<g color="#b9c3f0"><use href="#m-ar" transform="translate(2784 2020) rotate(110)"/><use href="#m-ar" transform="translate(2647 2327) rotate(122)"/><use href="#m-ar" transform="translate(2474 2615) rotate(122)"/><use href="#m-ar" transform="translate(937 2303) rotate(22)"/><use href="#m-ar" transform="translate(1180 2413) rotate(22)"/><use href="#m-ar" transform="translate(1545 2442) rotate(200)"/><use href="#m-ar" transform="translate(1959 2599) rotate(200)"/><use href="#m-ar" transform="translate(1288 2162) rotate(-105)"/><use href="#m-ar" transform="translate(1143 2567) rotate(80)"/></g>
<g color="#bfae72"><use href="#m-ar" transform="translate(1007 2216) rotate(203)"/><use href="#m-ar" transform="translate(1116 2235) rotate(165)"/><use href="#m-ar" transform="translate(1334 2507) rotate(-12)"/><use href="#m-ar" transform="translate(1921 2698) rotate(18)"/><use href="#m-ar" transform="translate(2009 2708) rotate(22)"/></g>
<use href="#m-br" x="1071" y="2036"/><use href="#m-car" x="1526" y="2010"/><use href="#m-bag" x="1453" y="2233"/><use href="#m-bag" x="1578" y="2270"/><use href="#m-br" x="1349" y="2428"/><use href="#m-cart" x="1349" y="2688"/><use href="#m-dot" x="926" y="2741"/><path d="M915 2753v-15l4-4 3 4v-8l4-6 4 6v8l3-4 4 4v15h-6v-6h-4v6z" fill="#9c7a70"/><use href="#m-home" x="1236" y="2767"/><use href="#m-fork" x="1587" y="2754"/>
<use href="#m-bed" x="1806" y="2009"/><use href="#m-cart" x="1962" y="1998"/><use href="#m-fork" x="2023" y="2389"/><use href="#m-cart" x="1847" y="2456"/><use href="#m-red" x="1929" y="2480"/><use href="#m-red" x="2044" y="2558"/><use href="#m-grad" x="2303" y="2572"/><use href="#m-red" x="2303" y="2650"/><use href="#m-red" x="1733" y="2767"/>
<use href="#m-cart" x="2582" y="1998"/><use href="#m-home" x="2655" y="2088"/><use href="#m-br" x="2809" y="2114"/><use href="#m-dot" x="3069" y="2154"/><path d="m3067 2142 8 19h-6v3h-4v-3h-7zM3060 2162h21v3h-21zM3078 2156h3v6h-3z" fill="#7cbb4a"/><use href="#m-home" x="2965" y="2244"/><use href="#m-cart" x="2738" y="2260"/><use href="#m-dot" x="2809" y="2414"/><path d="M2799 2406h23v8h-6q-2 7-8 7-8 0-9-8zM2799 2422h21v3h-21z" fill="#f59220"/><use href="#m-bed" x="3017" y="2481"/><use href="#m-home" x="3131" y="2546"/><use href="#m-red" x="2634" y="2571"/><use href="#m-bed" x="2894" y="2624"/><use href="#m-cart" x="2531" y="2729"/><use href="#m-dot" x="2997" y="2740"/><path d="M2985 2733h24v5h-2l-2 12h-16l-2-12h-2zM3001 2733l4-6" fill="#e04b3e" stroke="#e04b3e" stroke-width="2"/><path d="M2997 2737v9M2992 2742h9" stroke="#fff" stroke-width="2.500"/><use href="#m-br" x="3161" y="2754"/>
<rect x="1251" y="2372" width="33" height="34" rx="4" fill="#14b5f5"/><path d="M1259 2380q8-5 17 0v15h-17zM1260 2399l-3 4M1275 2399l3 4" fill="none" stroke="#fff" stroke-width="3"/><path d="M1259 2388h17v8h-17z" fill="#fff"/>
<g class="lb">
<use href="#m-ex" x="1038" y="2193"/><text class="ex" x="1038" y="2193">1</text><use href="#m-ex" x="1226" y="2127"/><text class="ex" x="1226" y="2127">2</text><use href="#m-ex" x="1340" y="2153"/><text class="ex" x="1340" y="2153">3</text><use href="#m-ex" x="1392" y="2337"/><text class="ex" x="1392" y="2337">4</text><use href="#m-ex" x="999" y="2363"/><text class="ex" x="999" y="2363">10</text><use href="#m-ex" x="1432" y="2533"/><text class="ex" x="1432" y="2533">7</text><use href="#m-ex" x="1226" y="2623"/><text class="ex" x="1226" y="2623">8</text><use href="#m-ex" x="1775" y="2675"/><text class="ex" x="1775" y="2675">6</text>
<use href="#m-sh" x="1191" y="2201"/><text class="sh" x="1191" y="2201">43</text><use href="#m-sh" x="1259" y="2539"/><text class="sh" x="1259" y="2539">43</text><use href="#m-sh" x="1516" y="2483"/><text class="sh" x="1516" y="2483">43</text>
<text x="1527" y="2042">서울렌터카</text><text x="1071" y="2068">퀸휘트니스클럽</text><text x="976" y="2100">광무빌딩</text><text class="nv" x="1454" y="2265">노스페이스</text><text class="nv" x="1578" y="2304">현대백화점</text><text class="tl" x="1214" y="2388">천호역</text><text x="1350" y="2460">천호지하차도</text><text x="871" y="2467">딩</text><text class="nv" x="1350" y="2723">GS25</text>
<text class="rd" transform="translate(1440 2099) rotate(27)" style="font-size:30px">올림픽로70길</text><text class="rd" transform="translate(1314 2246) rotate(72)" style="font-size:30px">올림픽로</text><text class="rd" transform="translate(1116 2481) rotate(71)" style="font-size:30px">올림픽로</text>
<text x="1806" y="2041">로얄장</text><text class="nv" x="1961" y="2031">GS25</text><text class="rs" transform="translate(2159 2076) rotate(5)">올림픽로70길</text><text class="rd" transform="translate(1862 2108) rotate(-68)">천호대로</text><text class="rd" transform="translate(1798 2355) rotate(-80)">천호대로</text><text class="rd" transform="translate(2214 2385) rotate(-85)" style="font-size:30px">천호대로155길</text><text class="rs" transform="translate(2447 2296) rotate(-82)">올림픽로70길</text><text class="rd" transform="translate(1752 2520) rotate(19)">천호대로</text>
<text class="rb" x="1898" y="2266">스타벅스</text><text class="rb" x="2023" y="2421">맥도날드</text><text class="nv" x="1847" y="2487">세븐일레븐</text><text class="rb" x="1930" y="2511">동명한의원</text><text class="rb" x="2045" y="2592">예솜의원</text><text x="2302" y="2604">동서울컴퓨터아트스쿨</text><text class="rb" x="2302" y="2682">장덕한의원</text><text x="2500" y="2426">명신빌딩</text>
<text x="2582" y="2031">GS25</text><text x="2655" y="2122">안아미오피스텔</text><text x="2811" y="2148">지유텔레콤</text><text class="gn" x="3069" y="2186">해오름상장례</text><text x="2966" y="2278">코오롱상가아파트</text><text class="nv" x="2739" y="2290">바이더웨이</text><text class="rb" x="2811" y="2448">카페베네</text><text x="3016" y="2512">계림장</text><text x="3131" y="2578">비전그린오피스텔</text><text class="rb" x="2635" y="2604">베스트치과의원</text><text x="2778" y="2610">풍원빌딩</text><text x="2892" y="2657">금오장여관</text><text x="2677" y="2740">세우빌딩</text><text x="2531" y="2762">CU</text><text class="rd" transform="translate(2561 2471) rotate(-59)" style="font-size:31px">천호대로157길</text>
</g>
<text x="880" y="2774" font-family="Lato" font-weight="600" font-size="40" stroke="#fff" stroke-width="3" paint-order="stroke"><tspan fill="#4285f4">G</tspan><tspan fill="#ea4335">o</tspan><tspan fill="#fbbc05">o</tspan><tspan fill="#4285f4">g</tspan><tspan fill="#34a853">l</tspan><tspan fill="#ea4335">e</tspan></text>
<path d="M2045 2390q-2-25-14-40-8-10-8-19a22 22 0 0 1 44 0q0 9-8 19-12 15-14 40z" fill="#f5574d" stroke="#b5332b" stroke-width="1.500"/><circle cx="2045" cy="2332" r="8" fill="#5f0f0c"/>
</svg>
    <div class="mtype d-flex"><button class="on" type="button">지도</button><button type="button">위성</button></div>
    <div class="bubble"><div class="who">[v]store-branch <em>5 days ago</em></div><div>3 Device | 25 Sensor</div><button type="button" aria-label="Close"><svg width="20" height="20" viewBox="0 0 20 20"><path d="m2 2 16 16M18 2 2 18" stroke="currentColor" stroke-width="4"/></svg></button><svg class="tail" width="40" height="46" viewBox="0 0 40 46"><path d="M2 1 19 44 38 1" fill="#fff" stroke="#bbb"/><path d="M1 0h38v3H1z" fill="#fff"/></svg></div>
    <div class="ctl peg"><button type="button" aria-label="Street view"><svg width="24" height="40" viewBox="0 0 24 40"><path d="M7 13h10l6 13-3 2-3-4v14h-4V28h-2v10H7V24l-3 4-3-2z" fill="#fbb829" stroke="#d08d18"/><circle cx="12" cy="7" r="6.500" fill="#fbc02d" stroke="#d08d18"/></svg></button></div>
    <div class="ctl zoom"><button type="button" aria-label="Zoom in"><svg width="22" height="22" viewBox="0 0 22 22"><path d="M11 1v20M1 11h20" stroke="currentColor" stroke-width="5"/></svg></button><button type="button" aria-label="Zoom out"><svg width="22" height="22" viewBox="0 0 22 22"><path d="M1 11h20" stroke="currentColor" stroke-width="5"/></svg></button></div>
   </div>
  </div>
 </div>
</section>
</main>
<script src="https://cdn.jsdelivr.net/npm/bootstrap@5.3.0/dist/js/bootstrap.bundle.min.js"></script>
</body>
</html>
